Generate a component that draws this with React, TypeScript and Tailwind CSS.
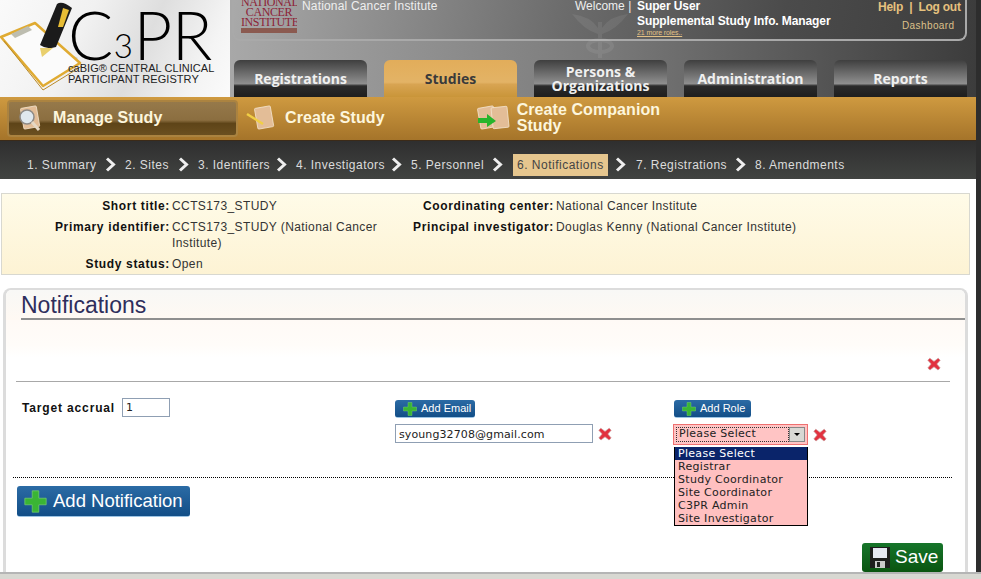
import type { ReactNode } from 'react';

const sans = 'font-["Liberation_Sans",Arial,sans-serif]';
const dialog = 'font-["DejaVu_Sans",Verdana,sans-serif]';

const steps = [
    { label: '1. Summary', w: 'w-[98px]', mr: 'mr-[9px]' },
    { label: '2. Sites', w: 'w-[73px]', mr: 'mr-[9px]' },
    { label: '3. Identifiers', w: 'w-[98px]', mr: 'mr-[9px]' },
    { label: '4. Investigators', w: 'w-[115px]', mr: 'mr-[9px]' },
    { label: '5. Personnel', w: 'w-[106px]', mr: 'mr-[14px]' },
    { label: '6. Notifications', w: 'w-[119px]', mr: 'mr-[10px]' },
    { label: '7. Registrations', w: 'w-[119px]', mr: 'mr-[9px]' },
    { label: '8. Amendments', w: 'w-[100px]', mr: '' },
];
const roles = ['Please Select', 'Registrar', 'Study Coordinator', 'Site Coordinator', 'C3PR Admin', 'Site Investigator'];

function Logo() {
    return (
        <div className="relative h-[97px] w-[230px] shrink-0 overflow-hidden bg-[linear-gradient(115deg,#fafafa_0%,#f1f1f1_35%,#dedede_60%,#f4f4f4_85%,#fbfbfb_100%)]">
            <svg className="absolute left-0 top-0" width="120" height="97" viewBox="0 0 120 97">
                <path d="M56 48 L78 58 L62 72 L46 62 Z" fill="#c9c9c9" />
                <path d="M1 37 L35 23 L80 63 L43 86 Z" fill="#fbfbfb" stroke="#e0ab32" strokeWidth="2.5" strokeLinejoin="round" />
                <path d="M4 41 L43 90 L82 66" fill="none" stroke="#b98a2a" strokeWidth="1" />
                <path d="M11 34 L28 26 L32 30 L15 38 Z" fill="#bdbdb0" />
                <path d="M40 45 L57 4 Q62 0 72 8 L56 47 Q47 50 40 45 Z" fill="#1b1b1b" />
                <path d="M58 27 L63 8 L69 10 L63 27 Z" fill="#e8bd35" />
                <path d="M40 48 L53 48 L42 57 Z" fill="#e9cf6d" />
            </svg>
            <div className="absolute left-[68px] top-[5px] h-[58px] whitespace-nowrap font-['Lato',sans-serif] text-[67px] leading-[58px] font-light tracking-[-.5px] text-black">
                C<span className="relative top-[-2px] mx-[1px] text-[33px]">3</span>PR
            </div>
            <div className={`absolute left-[68px] top-[63px] whitespace-nowrap text-[11px] leading-[11px] tracking-[.05px] text-[#222] ${sans}`}>
                <div>caBIG® CENTRAL CLINICAL</div>
                <div>PARTICIPANT REGISTRY</div>
            </div>
        </div>
    );
}

function Tab({ label, active }: { label: string; active?: boolean }) {
    return (
        <div className={`relative flex h-[37px] w-[133px] items-center justify-center rounded-t-[6px] text-center font-['Open_Sans',sans-serif] text-[14px] leading-[14px] font-bold ${active ? 'bg-[linear-gradient(#e2ad5a_0%,#e3b366_60%,#d8a452_66%,#c99539_100%)] text-[#3a3a3a]' : 'bg-[linear-gradient(#3f3f3f_0%,#8f8f8f_64%,#2b2b2b_70%,#1e1e1e_100%)] text-[#f0f0f0]'}`}>
            {label}
        </div>
    );
}

function RedX({ className = '' }: { className?: string }) {
    return (
        <svg className={className} width="14" height="14" viewBox="0 0 14 14">
            <path d="M2.8 1.2 L7 4.4 L11.2 1.2 L13.2 3.2 L9.8 7 L13.2 11 L11 13 L7 9.8 L3 13 L.8 11 L4.2 7 L.8 3.2 Z" fill="#e2323f" stroke="#c89a9a" strokeWidth=".7" />
        </svg>
    );
}

function Plus({ size }: { size: number }) {
    return (
        <svg width={size} height={size} viewBox="0 0 14 14" className="shrink-0">
            <path d="M5 .5 H9 V5 H13.5 V9 H9 V13.5 H5 V9 H.5 V5 H5 Z" fill="#3ab534" stroke="#7fd66f" strokeWidth=".4" />
        </svg>
    );
}

function Paper({ x = 0, r = -10 }: { x?: number; r?: number }) {
    return <rect x={x + 3} y="3" width="16" height="21" rx="1" fill="#e3bd97" stroke="#f3e3cc" strokeWidth=".8" transform={`rotate(${r} ${x + 11} 13)`} />;
}

function BlueButton({ label, className }: { label: string; className: string }) {
    return (
        <div className={`flex items-center rounded-[3px] border-b border-[#9cc4e4] bg-gradient-to-b from-[#2b6ba5] to-[#124e87] pl-[8px] text-[11px] text-white ${sans} ${className}`}>
            <Plus size={14} />
            <span className="ml-[4px]">{label}</span>
        </div>
    );
}

function Info({ label, children, w }: { label: string; children: ReactNode; w: string }) {
    return (
        <div className="flex gap-[2px]">
            <div className={`shrink-0 text-right font-bold tracking-[.65px] text-[#111] ${w}`}>{label}</div>
            <div className="flex-1 tracking-[.4px] text-[#333]">{children}</div>
        </div>
    );
}

export default function App() {
    return (
        <div className={`flex h-[579px] w-[981px] flex-col overflow-hidden bg-white ${sans}`}>
            <div className="flex flex-1 min-h-0">
                <div className="flex w-[976px] shrink-0 flex-col min-h-0">
                    {/* Header */}
                    <div className="flex h-[97px] shrink-0">
                        <Logo />
                        <div className="relative flex-1 bg-gradient-to-r from-[#a8a8a8] via-[#7a7a7a] to-[#3c3c3c]">
                            <div className="relative ml-[2px] mr-[9px] flex h-[41px] overflow-hidden rounded-b-[8px] border-x-2 border-b-2 border-[#a9a9a9] bg-[linear-gradient(100deg,#a9a9a9_0%,#6c6c6c_45%,#4b4b4b_75%,#3e3e3e_100%)] pl-[7px] text-white">
                                <div className="relative h-[33px] w-[56px] shrink-0 overflow-hidden text-center font-['Liberation_Serif',serif] text-[12px] leading-[10px] tracking-[-.4px] text-[#8d2338]">
                                    <div className="-mt-[3px]">NATIONAL</div><div>CANCER</div><div>INSTITUTE</div>
                                    <div className="mt-[1px] h-[5px] bg-[#8b5a50]" />
                                </div>
                                <div className="ml-[5px] w-[273px] shrink-0 text-[12px] leading-[12px] tracking-[.17px] text-[#eee]">National Cancer Institute</div>
                                <div className="w-[62px] shrink-0 whitespace-nowrap text-[12px] leading-[12px] text-[#eee]">Welcome |</div>
                                <div className="-mt-[1px] w-[241px] shrink-0 text-[12px] leading-[15px] font-bold tracking-[-.1px]">
                                    <div>Super User</div>
                                    <div>Supplemental Study Info. Manager</div>
                                    <div className="text-[7px] leading-[7px] font-normal text-[#e3c186] underline">21 more roles..</div>
                                </div>
                                <div className="w-[86px] shrink-0 text-[12px] font-bold text-[#e6c17e]">
                                    <div className="whitespace-nowrap leading-[14px] tracking-[-.25px]">Help &nbsp;|&nbsp; Log out</div>
                                    <div className="mt-[6px] pl-[24px] text-[10px] leading-[12px] font-normal tracking-[.4px] text-[#ddc089]">Dashboard</div>
                                </div>
                            </div>
                            {/* faint caduceus watermark */}
                            <svg className="absolute left-[340px] top-[12px] opacity-[.07]" width="60" height="46" viewBox="0 0 60 46">
                                <path d="M2 2 Q20 4 28 16 L28 22 Q14 18 2 2 Z M58 2 Q40 4 32 16 L32 22 Q46 18 58 2 Z" fill="#fff" />
                                <rect x="28" y="10" width="4" height="36" fill="#fff" />
                                <ellipse cx="30" cy="34" rx="12" ry="6" fill="none" stroke="#fff" strokeWidth="4" />
                            </svg>
                            <div className="relative mt-[19px] flex gap-[17px] pl-[4px]">
                                <Tab label="Registrations" />
                                <Tab label="Studies" active />
                                <Tab label="Persons & Organizations" />
                                <Tab label="Administration" />
                                <Tab label="Reports" />
                            </div>
                        </div>
                    </div>

                    {/* Orange band */}
                    <div className="flex h-[43px] shrink-0 items-center bg-gradient-to-b from-[#cf9a40] to-[#a5742a] text-[16px] font-bold tracking-[.08px] text-[#fdf6dd]">
                        <div className="ml-[7px] flex h-[37px] w-[231px] items-center rounded-[4px] border-2 border-[#ab8340] bg-[linear-gradient(#96794a_0%,#8b6e40_55%,#5e4418_65%,#6b4f20_100%)] pl-[6px]">
                            <svg width="28" height="30" viewBox="0 0 28 30" className="shrink-0">
                                <Paper x={4} />
                                <circle cx="12" cy="13" r="7" fill="#dfe8ee" stroke="#8d8a86" strokeWidth="1.5" />
                                <path d="M17 18 L24 26" stroke="#e6d8c4" strokeWidth="3" />
                            </svg>
                            <span className="ml-[10px] -mt-[2px]">Manage Study</span>
                        </div>
                        <svg width="32" height="30" viewBox="0 0 32 30" className="ml-[6px] shrink-0">
                            <Paper x={9} />
                            <path d="M3 10 L19 20" stroke="#f1cf45" strokeWidth="2.5" />
                        </svg>
                        <span className="ml-[9px] -mt-[2px]">Create Study</span>
                        <svg width="36" height="30" viewBox="0 0 36 30" className="ml-[91px] shrink-0">
                            <Paper x={0} />
                            <Paper x={13} r={-6} />
                            <path d="M2 14 H11 V10 L20 17 L11 23 V19 H2 Z" fill="#27b52c" />
                        </svg>
                        <span className="ml-[5px] -mt-[2px] w-[170px] leading-[16px]">Create Companion Study</span>
                    </div>

                    {/* Steps */}
                    <div className="flex h-[39px] shrink-0 items-center border-t border-[#3b2a18] bg-gradient-to-b from-[#2f2f2f] to-[#414341] pl-[27px] pt-[9px] text-[12px] tracking-[.48px] whitespace-nowrap text-[#dcdcdc]">
                        {steps.map((s, i) => (
                            <div key={s.label} className={`flex shrink-0 items-center justify-between ${s.w}`}>
                                <span className={i === 5 ? '-mx-[4px] bg-[#e6c68e] px-[4px] py-[2px] tracking-[.5px] text-[#444]' : ''}>{s.label}</span>
                                {i < steps.length - 1 && (
                                    <svg width="11" height="15" viewBox="0 0 11 15" className={s.mr}>
                                        <path d="M2 1.5 L8.5 7.5 L2 13.5" fill="none" stroke="#eee" strokeWidth="3" />
                                    </svg>
                                )}
                            </div>
                        ))}
                    </div>

                    {/* Study summary */}
                    <div className="ml-[1px] mr-[6px] mt-[14px] flex h-[82px] shrink-0 border border-[#d8d8d0] bg-gradient-to-b from-[#fffbe8] to-[#fdf3d4] pt-[4px] text-[12px] leading-[16px]">
                        <div className="flex w-[382px] shrink-0 flex-col gap-[5px]">
                            <Info label="Short title:" w="w-[168px]">CCTS173_STUDY</Info>
                            <Info label="Primary identifier:" w="w-[168px]">CCTS173_STUDY (National Cancer Institute)</Info>
                            <Info label="Study status:" w="w-[168px]">Open</Info>
                        </div>
                        <div className="flex flex-1 flex-col gap-[5px]">
                            <Info label="Coordinating center:" w="w-[170px]">National Cancer Institute</Info>
                            <Info label="Principal investigator:" w="w-[170px]">Douglas Kenny (National Cancer Institute)</Info>
                        </div>
                    </div>

                    {/* Panel */}
                    <div className="ml-[3px] mr-[8px] mt-[13px] flex-1 overflow-hidden rounded-t-[8px] border-x-[3px] border-t-[2px] border-[#dcdcdc] min-h-0">
                        <div className="bg-gradient-to-b from-[#f8f8f6] to-[#fff9f3] pl-[15px]">
                            <div className="h-[30px] border-b-2 border-[#8f8f8f] pt-[1px] text-[23px] leading-[28px] text-[#2e2e5c]">Notifications</div>
                        </div>
                        <div className="bg-[linear-gradient(#fffaf6_0%,#fffcf9_40%,#fff_60%)]">
                            <div className="ml-[10px] mr-[15px] h-[62px] border-b border-[#a8a8a8] pr-[9px] pt-[37px]">
                                <div className="flex justify-end"><RedX /></div>
                            </div>
                        </div>
                        <div className="relative mx-[7px] mr-[13px] h-[96px] border-b border-dotted border-black pl-[9px]">
                            <div className="flex pt-[16px]">
                                <div className="flex w-[373px] shrink-0 items-start">
                                    <span className="mt-[1px] text-[12px] leading-[18px] font-bold tracking-[.85px] text-[#111]">Target accrual</span>
                                    <div className={`ml-[7px] h-[19px] w-[48px] border border-[#8f9fb3] pl-[3px] text-[11px] leading-[18px] text-[#222] ${dialog}`}>1</div>
                                </div>
                                <div className="w-[279px] shrink-0 pt-[2px]">
                                    <BlueButton label="Add Email" className="h-[18px] w-[80px]" />
                                    <div className="mt-[6px] flex items-center">
                                        <div className={`h-[19px] w-[198px] border border-[#8f9fb3] pl-[3px] text-[11px] leading-[19px] tracking-[.1px] text-[#222] ${dialog}`}>syoung32708@gmail.com</div>
                                        <RedX className="ml-[5px]" />
                                    </div>
                                </div>
                                <div className="relative flex-1 pt-[2px]">
                                    <BlueButton label="Add Role" className="h-[18px] w-[77px]" />
                                    <div className="mt-[6px] flex items-center">
                                        <div className={`-ml-[1px] flex h-[21px] w-[135px] items-center border border-[#ee7070] bg-[#ffc4c4] px-[2px] text-[11px] tracking-[.3px] text-[#222] ${dialog}`}>
                                            <div className="flex h-[15px] flex-1 items-center border border-dotted border-[#333] pl-[2px]">Please Select</div>
                                            <div className="flex h-[15px] w-[16px] items-center justify-center border border-[#888] bg-[#d8d8d4]">
                                                <div className="h-0 w-0 border-x-[3px] border-t-[3px] border-x-transparent border-t-black" />
                                            </div>
                                        </div>
                                        <RedX className="ml-[5px]" />
                                    </div>
                                    <div className={`absolute left-0 top-[49px] z-10 w-[134px] border border-t-0 border-black bg-[#ffc0c0] text-[11px] leading-[13px] tracking-[.3px] text-[#222] ${dialog}`}>
                                        {roles.map((r, i) => (
                                            <div key={r} className={`h-[13px] pl-[3px] ${i === 0 ? 'bg-[#0a246a] text-white' : ''}`}>{r}</div>
                                        ))}
                                    </div>
                                </div>
                            </div>
                        </div>
                        <div className="ml-[11px] mr-[22px] mt-[8px]">
                            <div className="flex h-[31px] w-[173px] items-center rounded-[3px] border-b border-[#9cc4e4] bg-gradient-to-b from-[#2b6ba5] to-[#124e87] pl-[7px] text-[18.5px] text-white">
                                <Plus size={23} />
                                <span className="ml-[6px]">Add Notification</span>
                            </div>
                            <div className="mt-[26px] flex justify-end">
                                <div className="flex h-[29px] w-[81px] items-center rounded-[3px] bg-gradient-to-b from-[#16752a] to-[#0a5510] pl-[8px] text-[19px] text-white">
                                    <svg width="20" height="21" viewBox="0 0 20 21" className="shrink-0">
                                        <path d="M0 0 H20 V21 H0 Z" fill="#1d1d1d" />
                                        <rect x="3" y="1" width="14" height="10" fill="#e6e8f2" />
                                        <rect x="5" y="14" width="10" height="7" fill="#c9c9c9" />
                                        <rect x="7" y="15" width="3" height="5" fill="#222" />
                                    </svg>
                                    <span className="ml-[5px]">Save</span>
                                </div>
                            </div>
                        </div>
                    </div>
                </div>
                <div className="flex-1 bg-[#2d2d2d]" />
            </div>
            <div className="h-[7px] shrink-0 border-t-2 border-[#b5b5b5] bg-[#d8d8d2]" />
        </div>
    );
}
